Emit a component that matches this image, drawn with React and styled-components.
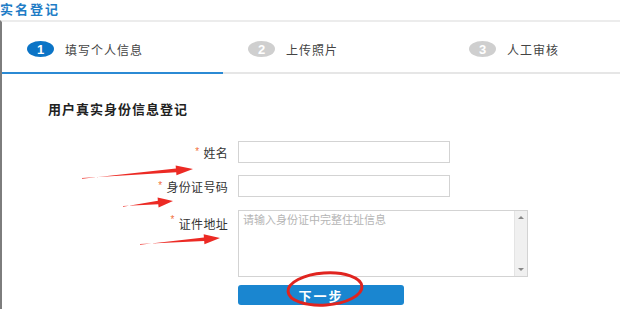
import React from "react";
import styled, { createGlobalStyle } from "styled-components";

const GlobalStyle = createGlobalStyle`
    html, body {
        margin: 0;
        padding: 0;
        background: #fff;
    }
    body {
        font-family: "Liberation Sans", "Noto Sans CJK SC", sans-serif;
    }
`;

const Page = styled.div`
    position: relative;
    width: 620px;
    height: 309px;
    overflow: hidden;
    background: #fff;
`;

const Title = styled.h1`
    margin: 0;
    height: 20px;
    padding-top: 1px;
    box-sizing: border-box;
    font-size: 13px;
    line-height: 17px;
    font-weight: bold;
    letter-spacing: 2px;
    color: #1f7dc6;
`;

const Panel = styled.div`
    height: 289px;
    box-sizing: border-box;
    border-top: 2px solid #ececec;
    border-left: 2px solid #7d7d7d;
`;

const Tabs = styled.div`
    display: flex;
    height: 50px;
    border-bottom: 2px solid #e6e6e6;
`;

const Tab = styled.div`
    flex: 0 0 221px;
    display: flex;
    align-items: center;
    gap: 11px;
    padding: 4px 0 0 25px;
    box-sizing: border-box;
    margin-bottom: -2px;
    border-bottom: 2px solid ${(p) => (p.$active ? "#2b8ad4" : "transparent")};
`;

const StepNum = styled.span`
    display: flex;
    align-items: center;
    justify-content: center;
    width: 27px;
    height: 16px;
    border-radius: 50%;
    background: ${(p) => (p.$active ? "#0b74c6" : "#cfcfcf")};
    color: #fff;
    font-size: 13px;
    font-weight: bold;
`;

const StepText = styled.span`
    font-size: 12px;
    letter-spacing: 1px;
    color: #444;
`;

const Form = styled.div`
    padding: 28px 0 0 0;
`;

const Heading = styled.h2`
    margin: 0 0 23px 46px;
    font-size: 13px;
    line-height: 16px;
    font-weight: bold;
    letter-spacing: 1px;
    color: #222;
`;

const Grid = styled.div`
    display: grid;
    grid-template-columns: 226px auto;
    column-gap: 10px;
    justify-content: start;
`;

const Label = styled.label`
    display: flex;
    align-items: ${(p) => (p.$top ? "flex-start" : "center")};
    justify-content: flex-end;
    padding-top: ${(p) => (p.$top ? "5px" : "0")};
    margin-top: ${(p) => p.$gap}px;
    font-size: 12px;
    letter-spacing: 0.3px;
    color: #333;
`;

const Star = styled.span`
    color: #f2703a;
    font-size: 10px;
    margin-right: 4px;
    position: relative;
    top: -1px;
`;

const Input = styled.input`
    width: 212px;
    height: 22px;
    box-sizing: border-box;
    margin: ${(p) => p.$gap}px 0 0 0;
    border: 1px solid #d3d3d3;
    padding: 0 4px;
    outline: none;
`;

const AreaBox = styled.div`
    display: flex;
    width: 290px;
    height: 67px;
    box-sizing: border-box;
    margin-top: 13px;
    border: 1px solid #d3d3d3;
`;

const Area = styled.textarea`
    flex: 1;
    min-width: 0;
    border: none;
    padding: 2px 4px;
    resize: none;
    overflow: hidden;
    font-family: "Liberation Sans", "Noto Sans CJK SC", sans-serif;
    font-size: 11px;
    line-height: 14px;
    outline: none;
    &::placeholder {
        color: #b5b5b5;
    }
`;

const ScrollTrack = styled.div`
    width: 13px;
    display: flex;
    flex-direction: column;
    justify-content: space-between;
    align-items: center;
    padding: 5px 0;
    box-sizing: border-box;
    background: #f0f0f0;
    border-left: 1px solid #e4e4e4;
`;

const ScrollArrow = styled.span`
    width: 0;
    height: 0;
    border-left: 3px solid transparent;
    border-right: 3px solid transparent;
    ${(p) => (p.$down ? "border-top: 3px solid #888;" : "border-bottom: 3px solid #888;")}
`;

const NextButton = styled.button`
    grid-column: 2;
    width: 166px;
    height: 20px;
    margin-top: 8px;
    border: none;
    border-radius: 3px;
    background: #1a86d0;
    color: #fff;
    font-family: "Liberation Sans", "Noto Sans CJK SC", sans-serif;
    font-size: 13px;
    font-weight: bold;
    letter-spacing: 2px;
    padding: 0;
`;

const Marks = styled.svg`
    position: absolute;
    top: 0;
    left: 0;
    pointer-events: none;
`;

// tapered red arrow from (x1,y1) to tip (x2,y2)
const arrowPoints = (x1, y1, x2, y2, head) => {
    const dx = x2 - x1;
    const dy = y2 - y1;
    const len = Math.hypot(dx, dy);
    const ux = dx / len;
    const uy = dy / len;
    const nx = -uy;
    const ny = ux;
    const bx = x2 - ux * head;
    const by = y2 - uy * head;
    const pts = [
        [x1, y1],
        [bx + nx * 1.8, by + ny * 1.8],
        [bx + nx * 5, by + ny * 5],
        [x2, y2],
        [bx - nx * 5, by - ny * 5],
        [bx - nx * 1.8, by - ny * 1.8],
        [x1 + nx * 0.8, y1 + ny * 0.8],
    ];
    return pts.map((p) => p.join(",")).join(" ");
};

const steps = ["填写个人信息", "上传照片", "人工审核"];

const App = () => {
    return (
        <>
            <GlobalStyle />
            <Page>
                <Title>实名登记</Title>
                <Panel>
                    <Tabs>
                        {steps.map((s, i) => (
                            <Tab key={s} $active={i === 0}>
                                <StepNum $active={i === 0}>{i + 1}</StepNum>
                                <StepText>{s}</StepText>
                            </Tab>
                        ))}
                    </Tabs>
                    <Form>
                        <Heading>用户真实身份信息登记</Heading>
                        <Grid>
                            <Label $gap={0}><Star>*</Star>姓名</Label>
                            <Input $gap={0} />
                            <Label $gap={12}><Star>*</Star>身份证号码</Label>
                            <Input $gap={12} />
                            <Label $top $gap={13}><Star>*</Star>证件地址</Label>
                            <AreaBox>
                                <Area placeholder="请输入身份证中完整住址信息" />
                                <ScrollTrack>
                                    <ScrollArrow />
                                    <ScrollArrow $down />
                                </ScrollTrack>
                            </AreaBox>
                            <NextButton>下一步</NextButton>
                        </Grid>
                    </Form>
                </Panel>
                <Marks width="620" height="309">
                    <polygon points={arrowPoints(82, 178, 193, 169, 17)} fill="#ec2a24" />
                    <polygon points={arrowPoints(123, 206, 173, 201, 15)} fill="#ec2a24" />
                    <polygon points={arrowPoints(140, 244, 220, 238, 16)} fill="#ec2a24" />
                    <ellipse
                        cx="325"
                        cy="289"
                        rx="37"
                        ry="16"
                        transform="rotate(-4 325 289)"
                        fill="none"
                        stroke="#e0241f"
                        strokeWidth="3"
                    />
                </Marks>
            </Page>
        </>
    );
};

export default App;
